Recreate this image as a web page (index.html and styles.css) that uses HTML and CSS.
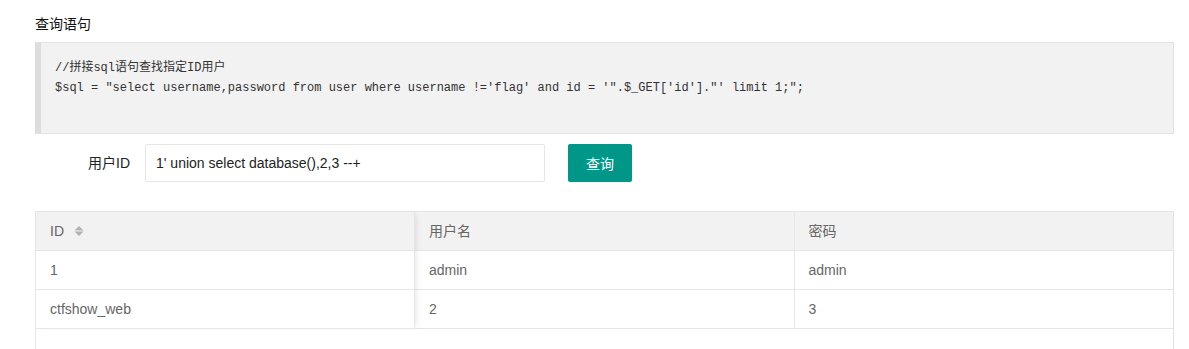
FILE: index.html
```html
<!DOCTYPE html>
<html lang="zh-CN">
<head>
  <meta charset="UTF-8">
  <title>查询语句</title>
  <link rel="stylesheet" href="styles.css">
</head>
<body>
  <div class="page">
    <div class="section-title">查询语句</div>

    <div class="code-quote">
      <div class="code-line">//拼接sql语句查找指定ID用户</div>
      <div class="code-line">$sql = "select username,password from user where username !='flag' and id = '".$_GET['id']."' limit 1;";</div>
    </div>

    <form class="query-form" onsubmit="return false">
      <label class="form-label" for="userId">用户ID</label>
      <input class="form-input" id="userId" type="text" value="1' union select database(),2,3 --+">
      <button class="form-btn" type="submit">查询</button>
    </form>

    <div class="table-box">
      <div class="table-body">
        <div class="col-fixed">
          <div class="cell head">ID <span class="sort-icon"><svg width="10" height="12" viewBox="0 0 10 12"><path d="M5 1 L9.5 5.5 H0.5 Z" fill="#b2b2b2"/><path d="M5 11 L9.5 6.5 H0.5 Z" fill="#b2b2b2"/></svg></span></div>
          <div class="cell">1</div>
          <div class="cell">ctfshow_web</div>
        </div>
        <div class="col-main">
          <div class="row head">
            <div class="cell">用户名</div>
            <div class="cell">密码</div>
          </div>
          <div class="row">
            <div class="cell">admin</div>
            <div class="cell">admin</div>
          </div>
          <div class="row">
            <div class="cell">2</div>
            <div class="cell">3</div>
          </div>
        </div>
      </div>
      <div class="table-empty"></div>
    </div>
  </div>
</body>
</html>
```

FILE: styles.css
```css
body {
  margin: 0;
  background: #fff;
  font-family: "Liberation Sans", "Noto Sans CJK SC", sans-serif;
  font-size: 14px;
  color: #333;
}
.page {
  padding: 14px 15px 0 35px;
}
.section-title {
  line-height: 20px;
  color: #111;
  margin-bottom: 8px;
}
.code-quote {
  background: #f2f2f2;
  border: 1px solid #e2e2e2;
  border-left: 6px solid #dddddd;
  padding: 15px 15px 35px 14px;
  font-family: "Liberation Mono", "Noto Sans CJK SC", monospace;
  font-size: 12px;
  line-height: 20px;
  color: #333;
}
.code-line {
  white-space: pre;
}
.query-form {
  display: flex;
  align-items: center;
  margin: 10px 0 29px;
}
.form-label {
  width: 80px;
  padding: 0 15px;
  text-align: right;
  color: #222;
  line-height: 38px;
}
.form-input {
  width: 400px;
  height: 38px;
  box-sizing: border-box;
  border: 1px solid #e6e6e6;
  border-radius: 2px;
  padding: 0 10px;
  font-family: inherit;
  font-size: 14px;
  color: #222;
  outline: none;
}
.form-btn {
  margin-left: 23px;
  width: 64px;
  height: 38px;
  border: none;
  border-radius: 2px;
  background: #009688;
  color: #fff;
  font-family: inherit;
  font-size: 14px;
}
.table-box {
  border: 1px solid #e6e6e6;
  border-right-color: #e2e2e2;
}
.table-body {
  display: flex;
}
.col-fixed {
  width: 378px;
  position: relative;
  z-index: 1;
  border-right: 1px solid #e6e6e6;
  box-shadow: 4px 0 6px -3px rgba(0, 0, 0, 0.1);
  background: #fff;
}
.col-main {
  flex: 1;
}
.row {
  display: flex;
}
.row .cell {
  flex: 1;
}
.row .cell + .cell {
  border-left: 1px solid #e6e6e6;
}
.cell {
  height: 38px;
  line-height: 38px;
  padding: 0 15px 0 14px;
  color: #666;
  border-bottom: 1px solid #e6e6e6;
  white-space: nowrap;
}
.head,
.col-fixed .cell.head {
  background: #f2f2f2;
}
.sort-icon {
  display: inline-block;
  margin-left: 6px;
  vertical-align: -1px;
}
.sort-icon svg {
  display: block;
}
.table-empty {
  height: 40px;
}
```
